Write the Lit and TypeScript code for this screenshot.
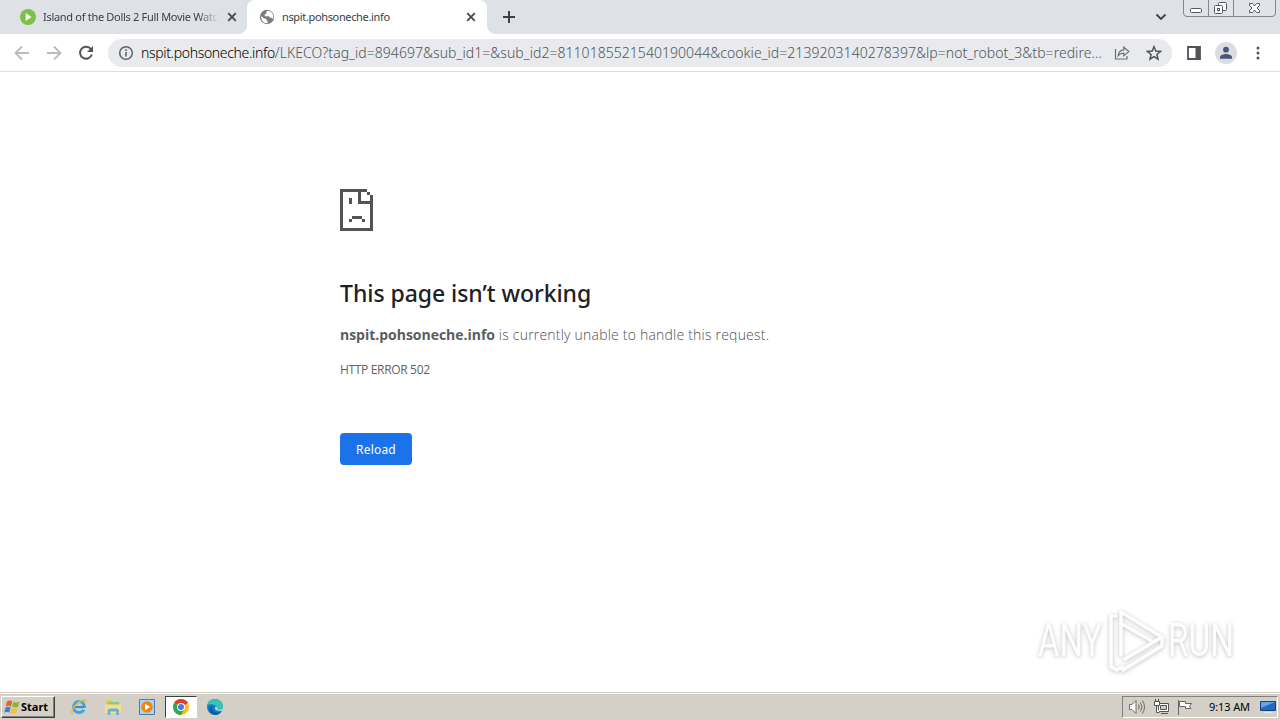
import { LitElement, html, css, svg } from 'lit';
import { customElement, property } from 'lit/decorators.js';

const closeIcon = html`
  <svg class="close" width="10" height="10" viewBox="0 0 10 10">
    <path d="M1.2 1.2l7.6 7.6M8.8 1.2l-7.6 7.6" stroke="#45494d" stroke-width="1.8" />
  </svg>
`;

@customElement('browser-tabs')
export class BrowserTabs extends LitElement {
  static styles = css`
    :host {
      display: flex;
      height: 34px;
      background: #dee1e6;
      font: 11px/14px 'Noto Sans', sans-serif;
      color: #3c4043;
    }

    .tab {
      display: flex;
      align-items: center;
      box-sizing: border-box;
      height: 34px;
      padding: 0 10px 0 20px;
      width: 247px;
    }

    .tab.active {
      position: relative;
      width: 240px;
      padding: 0 11px 0 12px;
      background: #fff;
      border-radius: 8px 8px 0 0;
    }

    .tab.active::before,
    .tab.active::after {
      content: '';
      position: absolute;
      bottom: 0;
      width: 8px;
      height: 8px;
    }

    .tab.active::before {
      left: -8px;
      background: radial-gradient(circle at 0 0, transparent 7.5px, #fff 8px);
    }

    .tab.active::after {
      right: -8px;
      background: radial-gradient(circle at 100% 0, transparent 7.5px, #fff 8px);
    }

    .title {
      flex: 1;
      margin: 0 8px 0 7px;
      overflow: hidden;
      white-space: nowrap;
      letter-spacing: -0.3px;
    }

    .title.faded {
      -webkit-mask-image: linear-gradient(90deg, #000 88%, transparent);
      mask-image: linear-gradient(90deg, #000 88%, transparent);
    }

    .active .title {
      letter-spacing: -0.35px;
    }

    svg {
      flex: none;
      display: block;
    }

    .plus {
      margin: 10px 0 0 15px;
    }

    .chevron {
      margin: 13px 16px 0 auto;
    }

    .controls {
      margin-right: 4px;
    }
  `;

  render() {
    return html`
      <div class="tab">
        <svg width="16" height="16" viewBox="0 0 16 16">
          <circle cx="8" cy="8" r="8" fill="#7bc143" />
          <path d="M5.7 4l5.8 4-5.8 4z" fill="#fff" />
        </svg>
        <span class="title faded">Island of the Dolls 2 Full Movie Watc</span>
        ${closeIcon}
      </div>
      <div class="tab active">
        <svg width="16" height="16" viewBox="0 0 16 16">
          <circle cx="8" cy="8" r="7.2" fill="#7a7d80" />
          <path d="M2.1 7.2l3.1 2.3 2.3.3v1.4l1.2 1.1-.3 1.9C4.7 14.4 1.7 11.4 2.1 7.2z" fill="#fff" />
          <path d="M8.5 1.8L7.3 3.2v1.6L5.7 5.6v1.6h4.2l1.1 1.5h1.5l1.6 1.2c1.2-4.4-1.6-7.8-5.6-8.1z" fill="#fff" />
        </svg>
        <span class="title">nspit.pohsoneche.info</span>
        ${closeIcon}
      </div>
      <svg class="plus" width="14" height="14" viewBox="0 0 14 14">
        <path d="M7 1v12M1 7h12" stroke="#3c4043" stroke-width="2" />
      </svg>
      <svg class="chevron" width="12" height="8" viewBox="0 0 12 8">
        <path d="M1.5 1.5L6 6l4.5-4.5" fill="none" stroke="#3c4043" stroke-width="1.8" />
      </svg>
      <svg class="controls" width="93" height="17" viewBox="0 0 93 17">
        <path d="M.5 0v13q0 3.5 3.5 3.5h85q3.5 0 3.5-3.5V0M25.5 0v16M50.5 0v16" fill="#e0e3e8" stroke="#84888e" />
        <g fill="#fff" stroke="#55595f">
          <rect x="7.5" y="8.5" width="11" height="4" rx="1" />
          <rect x="35.5" y="2.5" width="8" height="8" rx="1" />
          <rect x="31.5" y="5.5" width="8" height="8" rx="1" />
          <rect x="34.5" y="8.5" width="2" height="2" />
          <path d="M66.5 3.5h3l2 2.5 2-2.5h3v2L74 8l2.5 2.5v2h-3l-2-2.5-2 2.5h-3v-2L69 8l-2.5-2.5z" />
        </g>
      </svg>
    `;
  }
}

@customElement('browser-toolbar')
export class BrowserToolbar extends LitElement {
  @property() host = '';
  @property() path = '';

  static styles = css`
    :host {
      display: flex;
      align-items: center;
      box-sizing: border-box;
      height: 38px;
      padding: 0 12px 0 14px;
      background: #fff;
      border-bottom: 1px solid #dcdde0;
    }

    svg {
      flex: none;
      display: block;
    }

    .nav {
      display: flex;
      gap: 16px;
    }

    .omnibox {
      display: flex;
      align-items: center;
      box-sizing: border-box;
      width: 1064px;
      height: 28px;
      margin: 0 15px 0 14px;
      padding: 0 10px;
      border-radius: 14px;
      background: #e8eaed;
    }

    .url {
      flex: 1;
      margin: 0 12px 0 7px;
      overflow: hidden;
      white-space: nowrap;
      font: 300 14px/20px 'Noto Sans', sans-serif;
      letter-spacing: 0.045px;
      color: #50545a;
    }

    .host {
      letter-spacing: -0.34px;
      color: #000;
    }

    .star {
      margin-left: 16px;
    }

    .avatar {
      margin: 0 13px 0 14px;
    }
  `;

  render() {
    return html`
      <div class="nav">
        <svg width="16" height="16" viewBox="0 0 16 16">
          <path d="M15 8H2M8 1.5L1.5 8 8 14.5" fill="none" stroke="#b9bbbe" stroke-width="1.8" />
        </svg>
        <svg width="16" height="16" viewBox="0 0 16 16">
          <path d="M1 8h13M8 1.5L14.5 8 8 14.5" fill="none" stroke="#b9bbbe" stroke-width="1.8" />
        </svg>
        <svg width="16" height="16" viewBox="0 0 16 16">
          <path d="M13 4.3A6 6 0 1 0 13.8 9.5" fill="none" stroke="#505357" stroke-width="2" />
          <path d="M15 1v6H9z" fill="#505357" />
        </svg>
      </div>
      <div class="omnibox">
        <svg width="16" height="16" viewBox="0 0 16 16">
          <circle cx="8" cy="8" r="6.3" fill="none" stroke="#5f6368" stroke-width="1.5" />
          <path d="M8 7v4.6M8 4.3v1.6" stroke="#5f6368" stroke-width="1.6" />
        </svg>
        <span class="url"><span class="host">${this.host}</span>${this.path}</span>
        <svg width="16" height="16" viewBox="0 0 16 16" fill="none" stroke="#6c7075" stroke-width="1.2">
          <path d="M1.5 4v10H13v-3" />
          <path d="M4.2 10.5c.4-3.6 2.3-5.3 5.6-5.6V2.2l5 4.4-5 4.2V8.2c-2.5 0-4.3.7-5.6 2.3z" />
        </svg>
        <svg class="star" width="16" height="16" viewBox="0 0 16 16">
          <path
            d="M8 1.8l1.8 4.3 4.7.4-3.6 3 1.1 4.6L8 11.6l-4 2.5 1.1-4.6-3.6-3 4.7-.4z"
            fill="none"
            stroke="#505357"
            stroke-width="1.5"
          />
        </svg>
      </div>
      <svg width="14" height="14" viewBox="0 0 14 14">
        <path d="M1 1h12v12H1z" fill="#fff" stroke="#505357" stroke-width="1.8" />
        <path d="M8.5 1H13v12H8.5z" fill="#505357" />
      </svg>
      <svg class="avatar" width="22" height="22" viewBox="0 0 22 22">
        <circle cx="11" cy="11" r="11" fill="#dadde2" />
        <circle cx="11" cy="7.7" r="2.9" fill="#485575" />
        <path d="M5 16.8v-1.5c0-2 4-3.2 6-3.2s6 1.2 6 3.2v1.5z" fill="#485575" />
      </svg>
      <svg width="16" height="16" viewBox="0 0 16 16" fill="#505357">
        <circle cx="8" cy="3" r="1.5" />
        <circle cx="8" cy="8" r="1.5" />
        <circle cx="8" cy="13" r="1.5" />
      </svg>
    `;
  }
}

@customElement('error-page')
export class ErrorPage extends LitElement {
  @property() host = '';

  static styles = css`
    :host {
      display: block;
      position: relative;
      flex: 1;
      background: #fff;
      font-family: 'Open Sans', sans-serif;
      color: #5f6368;
    }

    .content {
      width: 600px;
      margin: 0 auto;
      padding-top: 117px;
    }

    .sad {
      display: block;
    }

    h1 {
      margin: 47px 0 0;
      font: 500 23px/30px 'Noto Sans', sans-serif;
      letter-spacing: -0.05px;
      color: #202124;
    }

    p {
      margin: 16px 0 0;
      font-size: 14px;
      line-height: 22px;
      font-weight: 300;
      letter-spacing: 0.21px;
      color: #4c5055;
    }

    b {
      font-weight: 700;
      letter-spacing: -0.02px;
      color: #5a5d61;
    }

    .code {
      margin-top: 14px;
      font-size: 12px;
      line-height: 20px;
      letter-spacing: -0.33px;
    }

    button {
      display: block;
      width: 72px;
      height: 32px;
      margin-top: 53px;
      padding: 1px 0 0;
      border: none;
      border-radius: 4px;
      background: #1a73e8;
      color: #fff;
      font: 12px/31px 'Noto Sans', sans-serif;
      letter-spacing: 0.2px;
    }

    .watermark {
      position: absolute;
      right: 30px;
      bottom: 17px;
      filter: drop-shadow(0 1px 2px rgba(0, 0, 0, 0.25));
    }

    .brand {
      font: 46px 'Roboto', sans-serif;
    }
  `;

  render() {
    return html`
      <div class="content">
        <svg class="sad" width="33" height="42" viewBox="0 0 33 42" shape-rendering="crispEdges">
          <path
            d="M0 0h27v3h3v3h3v36H0zM3 3v36h27V15H18V3zM21 3v9h9V6h-3V3zM9 9h3v6H9zM12 27h10v3H12zM9 30h3v3H9zM22 30h3v3h-3z"
            fill="#535353"
            fill-rule="evenodd"
          />
        </svg>
        <h1>This page isn’t working</h1>
        <p><b>${this.host}</b> is currently unable to handle this request.</p>
        <div class="code">HTTP ERROR 502</div>
        <button>Reload</button>
      </div>
      <svg class="watermark" width="220" height="72" viewBox="0 0 220 72">
        <g class="brand" fill="#fdfdfd">
          <text x="8" y="53" textLength="64" lengthAdjust="spacingAndGlyphs">ANY</text>
          <text x="138" y="53" textLength="66" lengthAdjust="spacingAndGlyphs">RUN</text>
        </g>
        <g fill="none" stroke="#fdfdfd" stroke-width="3.5" stroke-linejoin="round" stroke-linecap="round">
          <path d="M91 52V9l41 25-37 22" />
          <path d="M92 21l30 17M86 13h-5v51l6 3 5-3M93 67l39-24V34" />
        </g>
      </svg>
    `;
  }
}

@customElement('task-bar')
export class TaskBar extends LitElement {
  static styles = css`
    :host {
      display: flex;
      align-items: center;
      box-sizing: border-box;
      height: 28px;
      padding: 2px 2px 0 1px;
      background: #d4d0c8;
      box-shadow: inset 0 1px #d4d0c8, inset 0 2px #fff;
      font-family: 'Noto Sans', sans-serif;
      font-size: 11px;
      line-height: 14px;
      color: #000;
    }

    svg {
      flex: none;
      display: block;
    }

    .start {
      display: flex;
      align-items: center;
      box-sizing: border-box;
      width: 54px;
      height: 22px;
      padding: 0 0 0 2px;
      border: 1px solid;
      border-color: #fff #404040 #404040 #fff;
      box-shadow: inset -1px -1px #808080;
      font-weight: bold;
    }

    .apps {
      display: flex;
      align-items: center;
      margin-left: 8px;
      gap: 2px;
    }

    .app {
      display: flex;
      align-items: center;
      justify-content: center;
      box-sizing: border-box;
      width: 32px;
      height: 22px;
    }

    .app.active {
      background: #fff;
      border: 1px solid;
      border-color: #404040 #fff #fff #404040;
    }

    .tray {
      display: flex;
      align-items: center;
      box-sizing: border-box;
      width: 156px;
      height: 22px;
      margin-left: auto;
      padding-left: 5px;
      border: 1px solid;
      border-color: #808080 #fff #fff #808080;
    }

    .tray svg {
      margin-right: 7px;
    }

    .clock {
      width: 43px;
      margin: 0 8px 0 8px;
      white-space: nowrap;
      letter-spacing: -0.1px;
    }

    .tray .desktop {
      margin: 0;
    }
  `;

  private _apps = [
    svg`
      <circle cx="9" cy="9" r="5.4" fill="none" stroke="#39a5e4" stroke-width="3" />
      <path d="M4 9h11" stroke="#2f93d6" stroke-width="2.2" />
      <path d="M13 11h5" stroke="#d4d0c8" stroke-width="2" />
      <path d="M2.5 16C-.5 14 6 5 12 2.5c3-1.2 4.5-.5 4 1.7" fill="none" stroke="#e8b63a" stroke-width="1.5" />
    `,
    svg`
      <path d="M2 2h5l1 1.5h8V14H2z" fill="#e9c75d" />
      <path d="M4 4h11v4H4z" fill="#8fc77f" />
      <path d="M1 6.5h16V15H1z" fill="#f5df8b" />
      <path d="M3.5 17v-4q0-2.5 2.5-2.5h6.5q2.5 0 2.5 2.5v4h-2.8v-3.5H6.3V17z" fill="#65b3dc" />
    `,
    svg`
      <path d="M1.5 1.5h15v15h-15z" fill="#a9d4f3" stroke="#477fac" />
      <circle cx="9" cy="9" r="5.8" fill="#ef8519" />
      <path d="M7 5.8l5 3.2-5 3.2z" fill="#fff" />
    `,
    svg`
      <circle cx="9" cy="9" r="8" fill="#fbc116" />
      <path d="M9 9L2.1 5A8 8 0 0 1 15.9 5z" fill="#e33b2e" />
      <path d="M9 9L2.1 5A8 8 0 0 0 9 17l3.5-6z" fill="#2da94f" />
      <circle cx="9" cy="9" r="4" fill="#fff" />
      <circle cx="9" cy="9" r="3" fill="#3f7de8" />
    `,
    svg`
      <circle cx="9" cy="9" r="8" fill="#167fc9" />
      <path d="M1.3 7A8 8 0 0 1 17 9c0 2.5-2 3.7-5 3.4-2-.3-1-1.4-1-2.9C11 7 5 5 1.3 7z" fill="#37c6b5" />
      <path d="M7 8c-2 4 1 7.5 8 6-4 5-11 3-12-2-.3-2 1.5-4 4-4z" fill="#125ba8" />
      <path d="M9.5 8.5c-1.5 2.5.5 5 6.5 4.2l1.5-2-5 1.3c-1.5-.4-1.5-1.5-1-2.5z" fill="#d4d0c8" />
    `,
  ];

  render() {
    return html`
      <div class="start">
        <svg width="17" height="16" viewBox="0 0 17 16">
          <path d="M3 2.5Q5.5.8 8.3 2.3L7 7.5Q4.3 6 1.7 7.5z" fill="#e8642a" />
          <path d="M9.3 2.7Q12 4.3 15.5 2.8L14 8Q11 9.3 8 7.8z" fill="#86b83a" />
          <path d="M1.4 8.7Q4 7 6.7 8.6L5.3 13.5Q3 12.3.2 13.5z" fill="#3c84cf" />
          <path d="M7.7 9Q10.5 10.5 13.7 9.2L12.3 14Q9.3 15.3 6.3 13.8z" fill="#f5bf2f" />
        </svg>
        Start
      </div>
      <div class="apps">
        ${this._apps.map(
          (icon, i) => html`
            <div class="app ${i === 3 ? 'active' : ''}">
              <svg width="18" height="18" viewBox="0 0 18 18">${icon}</svg>
            </div>
          `,
        )}
      </div>
      <div class="tray">
        <svg width="18" height="16" viewBox="0 0 18 16" fill="none" stroke="#6d6d6d">
          <path d="M1.5 5.5H4l4-4v13l-4-4H1.5z" fill="#fff" />
          <path d="M10.5 5.5q1.5 2.5 0 5M12.5 3.5q3 4.5 0 9M14.5 1.5q4 6.5 0 13" />
        </svg>
        <svg width="17" height="16" viewBox="0 0 17 16" stroke="#555" fill="#fff">
          <path d="M5.5 4.5h10v8h-10zM8 14.5h7" />
          <path d="M7.5 6.5h6v4h-6z" fill="#ccc" />
          <path d="M1.5 2.5h5v4h-5zM2.5 0v2M5.5 0v2M3.5 6.5v7h3" />
        </svg>
        <svg width="17" height="16" viewBox="0 0 17 16" stroke="#666" fill="#fff">
          <path d="M1.5 1v15M2.5 2.5h6v2h6l-2 3 1.5 2H8.5v-2h-6z" />
        </svg>
        <span class="clock">9:13 AM</span>
        <svg class="desktop" width="16" height="14" viewBox="0 0 16 14">
          <path d="M.5 1.5h15v9H.5z" fill="#2468c4" stroke="#18427f" />
          <path d="M1 2h14L1 8z" fill="#65a4e6" />
          <path d="M4 12.5h8" stroke="#dfeaf5" />
        </svg>
      </div>
    `;
  }
}

@customElement('app-root')
export class AppRoot extends LitElement {
  static styles = css`
    :host {
      display: flex;
      flex-direction: column;
      width: 1280px;
      height: 720px;
      overflow: hidden;
    }
  `;

  private _host = 'nspit.pohsoneche.info';
  private _path =
    '/LKECO?tag_id=894697&sub_id1=&sub_id2=8110185521540190044&cookie_id=2139203140278397&lp=not_robot_3&tb=redire...';

  render() {
    return html`
      <browser-tabs></browser-tabs>
      <browser-toolbar .host=${this._host} .path=${this._path}></browser-toolbar>
      <error-page .host=${this._host}></error-page>
      <task-bar></task-bar>
    `;
  }
}

declare global {
  interface HTMLElementTagNameMap {
    'app-root': AppRoot;
    'browser-tabs': BrowserTabs;
    'browser-toolbar': BrowserToolbar;
    'error-page': ErrorPage;
    'task-bar': TaskBar;
  }
}
